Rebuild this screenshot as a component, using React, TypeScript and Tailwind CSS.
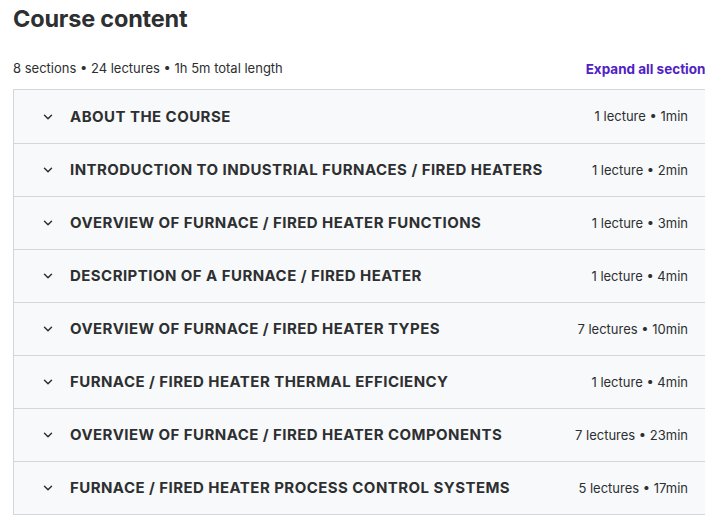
import { ChevronDown } from "lucide-react";

const SECTIONS = [
  { title: "ABOUT THE COURSE", meta: "1 lecture • 1min" },
  { title: "INTRODUCTION TO INDUSTRIAL FURNACES / FIRED HEATERS", meta: "1 lecture • 2min" },
  { title: "OVERVIEW OF FURNACE / FIRED HEATER FUNCTIONS", meta: "1 lecture • 3min" },
  { title: "DESCRIPTION OF A FURNACE / FIRED HEATER", meta: "1 lecture • 4min" },
  { title: "OVERVIEW OF FURNACE / FIRED HEATER TYPES", meta: "7 lectures • 10min" },
  { title: "FURNACE / FIRED HEATER THERMAL EFFICIENCY", meta: "1 lecture • 4min" },
  { title: "OVERVIEW OF FURNACE / FIRED HEATER COMPONENTS", meta: "7 lectures • 23min" },
  { title: "FURNACE / FIRED HEATER PROCESS CONTROL SYSTEMS", meta: "5 lectures • 17min" },
];

export default function App() {
  return (
    <div className="w-[705px] h-[515px] overflow-hidden bg-white text-[#2d2f31] font-['Inter',sans-serif]">
      <div className="w-[700px] pl-[13px] pt-[4px]">
        <h2 className="text-[23.5px] font-bold leading-[30px] tracking-[-0.2px]">Course content</h2>

        <div className="flex items-center justify-between mt-[25px] w-[700px]">
          <span className="text-[13px] text-[#2d2f31]">8 sections • 24 lectures • 1h 5m total length</span>
          <span className="text-[13.5px] font-bold text-[#5022c3] whitespace-nowrap">Expand all sections</span>
        </div>

        <div className="mt-[10px] w-[700px] border border-[#d1d7dc]">
          {SECTIONS.map((s, i) => (
            <div
              key={s.title}
              className={`flex items-center h-[53px] bg-[#f7f9fa] pl-[27px] pr-[24px] ${i > 0 ? "border-t border-[#d1d7dc]" : ""}`}
            >
              <ChevronDown className="w-[14px] h-[14px] mr-[15px]" strokeWidth={2.5} />
              <span className="flex-1 text-[15px] font-bold tracking-[0.45px]">{s.title}</span>
              <span className="text-[13px] text-[#2d2f31]">{s.meta}</span>
            </div>
          ))}
        </div>
      </div>
    </div>
  );
}
